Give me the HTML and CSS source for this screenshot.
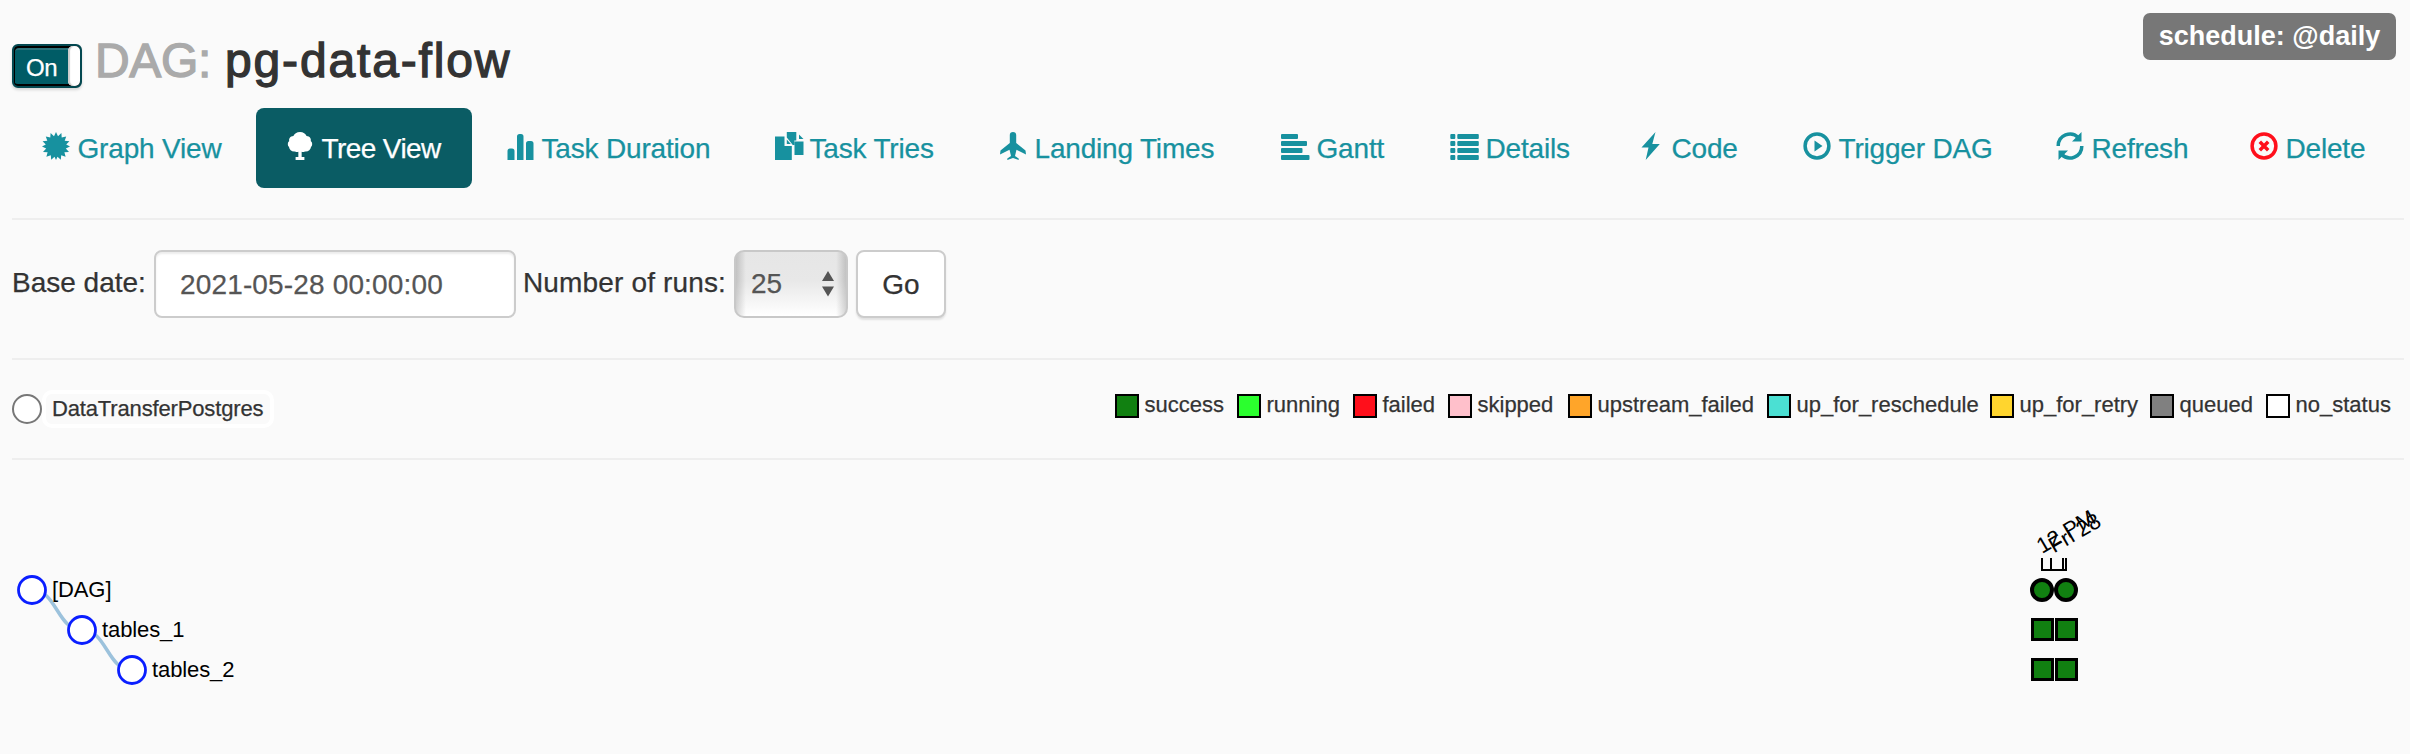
FILE: index.html
```html
<!DOCTYPE html>
<html lang="en">
<head>
<meta charset="utf-8">
<title>pg-data-flow</title>
<link rel="stylesheet" href="styles.css">
</head>
<body>
<header class="head">
  <div class="toggle"><span class="toggle-label">On</span><span class="toggle-knob"></span></div>
  <h3 class="title"><span class="muted">DAG:</span><span class="name">pg-data-flow</span></h3>
  <span class="badge">schedule: @daily</span>
</header>
<nav class="tabs">
  <a class="tab"><svg class="icon" viewBox="0 0 28 28"><path d="M14 0l2 4.200 3.400-3.200.3 4.600 4.500-1.200-1.500 4.400 4.700.4-3.200 3.400L28 14.500l-4.200 2 3.200 3.400-4.600.3 1.200 4.500-4.400-1.500-.4 4.500-3.300-3-1.500 3.300-1.500-3.300-3.300 3-.4-4.500-4.400 1.500 1.200-4.500-4.600-.3 3.200-3.400-4.200-2 3.800-1.900L.6 9.200l4.700-.4-1.500-4.400 4.500 1.200.3-4.600L12 4.200z"/></svg><span>Graph View</span></a>
  <a class="tab active"><svg class="icon" viewBox="0 0 28 28"><path transform="translate(-1.400 0) scale(1.100 1)" d="M14 0c-3 0-5.200 1.700-6 4C5 4.300 3.700 6.600 4.200 9 2.500 10.500 2.500 13.500 4 15c.3 3 2.800 5 5.500 4.500 1 .6 2 .7 3 .3V25H10v3h8v-3h-2.500v-5.200c1 .4 2 .3 3-.3 2.700.5 5.200-1.500 5.500-4.500 1.500-1.500 1.500-4.500-.2-6 .5-2.400-.8-4.700-3.800-5-.8-2.300-3-4-6-4z"/></svg><span>Tree View</span></a>
  <a class="tab"><svg class="icon" viewBox="0 0 28 28"><path d="M1.500 28V19q0-2.500 2.500-2.500h2q2.500 0 2.500 2.500v9zM11 28V4.500Q11 2 13.500 2h1.500q2.500 0 2.500 2.500V28zM20 28V11.500Q20 9 22.500 9H25q2.500 0 2.500 2.500V28z"/></svg><span>Task Duration</span></a>
  <a class="tab"><svg class="icon" viewBox="0 0 28 28"><path d="M1 4.500H10.500V14H17.800v14H1zM12.800 0h9.500v8.500h-2V13h-1.500L12.800 5.500zM12.800 7.500l4 4.500h-4zM20.500 9.500h9V23h-9zM25 2.500l4.500 4.500h-4.500z"/></svg><span>Task Tries</span></a>
  <a class="tab"><svg class="icon" viewBox="0 0 28 28"><path d="M14 0c-2 0-3.200 1.200-3.200 3v8L1.500 18.500 1 22.500l9.500-4.700L12 24l-3.700 2.500v1.500L14 26l5.700 2v-1.500L16 24l1.500-6.200 9.500 4.700-.5-4L17.200 11V3c0-1.800-1.200-3-3.200-3z"/></svg><span>Landing Times</span></a>
  <a class="tab"><svg class="icon" viewBox="0 0 28 28"><rect y="2" width="17" height="5" rx="1"/><rect y="9" width="26" height="5" rx="1"/><rect y="16" width="21.500" height="5" rx="1"/><rect y="23" width="28.500" height="5" rx="1"/></svg><span>Gantt</span></a>
  <a class="tab"><svg class="icon" viewBox="0 0 28 28"><path d="M.3 3q0-1 1-1h3q1 0 1 1v3q0 1-1 1h-3q-1 0-1-1zM.3 10q0-1 1-1h3q1 0 1 1v3q0 1-1 1h-3q-1 0-1-1zM.3 17q0-1 1-1h3q1 0 1 1v3q0 1-1 1h-3q-1 0-1-1zM.3 24q0-1 1-1h3q1 0 1 1v3q0 1-1 1h-3q-1 0-1-1z"/><rect x="7.300" y="2" width="21.500" height="5" rx="1"/><rect x="7.300" y="9" width="21.500" height="5" rx="1"/><rect x="7.300" y="16" width="21.500" height="5" rx="1"/><rect x="7.300" y="23" width="21.500" height="5" rx="1"/></svg><span>Details</span></a>
  <a class="tab"><svg class="icon" viewBox="0 0 28 28"><path d="M19.500 0L5.500 15.500h7L9.700 28 23.800 12h-7.500z"/></svg><span>Code</span></a>
  <a class="tab"><svg class="icon" viewBox="0 0 28 28"><circle class="ring" cx="14" cy="14" r="11.900"/><path d="M11.500 8.500l8 5.500-8 5.500z"/></svg><span>Trigger DAG</span></a>
  <a class="tab"><svg class="icon" viewBox="0 0 28 28"><path class="arc" d="M2.200 14A11.800 11.800 0 0 1 22.500 5.700M25.800 14A11.800 11.800 0 0 1 5.500 22.300"/><path d="M25.500 0v9.500H16zM2.500 28v-9.500H12z"/></svg><span>Refresh</span></a>
  <a class="tab"><svg class="icon danger" viewBox="0 0 28 28"><circle class="ring" cx="14" cy="14" r="11.900"/><path class="cross" d="M9.800 9.800l8.400 8.400M18.200 9.800l-8.400 8.400"/></svg><span>Delete</span></a>
</nav>
<hr class="rule">
<form class="form">
  <label class="base-label">Base date:</label>
  <div class="input">2021-05-28 00:00:00</div>
  <label class="runs-label">Number of runs:</label>
  <div class="select"><span>25</span><svg class="arrows" viewBox="0 0 12 26"><path d="M0 10L6 0l6 10zM0 15.500h12L6 25.500z"/></svg></div>
  <div class="go">Go</div>
</form>
<hr class="rule">
<section class="legend">
  <span class="dot"></span><span class="operator">DataTransferPostgres</span>
  <div class="states">
    <span class="state"><i class="sw success"></i>success</span>
    <span class="state"><i class="sw running"></i>running</span>
    <span class="state"><i class="sw failed"></i>failed</span>
    <span class="state"><i class="sw skipped"></i>skipped</span>
    <span class="state"><i class="sw upstream"></i>upstream_failed</span>
    <span class="state"><i class="sw reschedule"></i>up_for_reschedule</span>
    <span class="state"><i class="sw retry"></i>up_for_retry</span>
    <span class="state"><i class="sw queued"></i>queued</span>
    <span class="state"><i class="sw none"></i>no_status</span>
  </div>
</section>
<hr class="rule">
<svg class="tree" width="2392" height="294" viewBox="12 460 2392 294">
  <path class="link" d="M32 590C57 590 57 630 82 630M82 630C107 630 107 670 132 670"/>
  <g class="nodes"><circle cx="32" cy="590" r="13.500"/><circle cx="82" cy="630" r="13.500"/><circle cx="132" cy="670" r="13.500"/></g>
  <g class="labels"><text x="52" y="596.500">[DAG]</text><text x="102" y="636.500">tables_1</text><text x="152" y="676.500">tables_2</text></g>
  <path class="axis" d="M2042 558v12h24v-12M2051 558v12M2063 558v12"/>
  <g class="ticks"><text transform="translate(2042 554) rotate(-30)">12 PM</text><text transform="translate(2054 553.500) rotate(-30)">Fri 28</text></g>
  <g class="runs"><circle cx="2042" cy="590" r="10"/><circle cx="2066" cy="590" r="10"/></g>
  <g class="tasks"><rect x="2032.500" y="619.500" width="20" height="20"/><rect x="2056.500" y="619.500" width="20" height="20"/><rect x="2032.500" y="659.500" width="20" height="20"/><rect x="2056.500" y="659.500" width="20" height="20"/></g>
</svg>
</body>
</html>
```

FILE: styles.css
```css
* { box-sizing: border-box; }
body {
  margin: 0;
  padding: 0 6px 0 12px;
  background: #fafafa;
  color: #333;
  font: 28px/40px "Liberation Sans", Arial, sans-serif;
  white-space: nowrap;
  overflow: hidden;
  -webkit-text-stroke: .25px currentColor;
}
.head { display: flex; align-items: flex-start; height: 108px; }
.toggle {
  display: flex;
  width: 70px;
  height: 44px;
  margin-top: 44px;
  border: 2px solid #034850;
  border-radius: 6px;
  background: #005c66;
  box-shadow: inset 1px 2px 0 #000, inset 0 -2px 0 #000, inset 0 4px 0 #2b737b, 0 2px 3px rgba(0,0,0,.15);
  color: #fff;
}
.toggle-label { width: 54px; padding-left: 12px; font-size: 24px; line-height: 43px; letter-spacing: -.5px; }
.toggle-knob { width: 12px; height: 40px; border-radius: 5px; background: #fff; box-shadow: inset 2px 0 1px #ccc; }
.title { display: flex; margin: 31px 0 0 13px; font-weight: 400; font-size: 48px; line-height: 60px; -webkit-text-stroke: 1.300px currentColor; }
.muted { width: 130px; color: #aaa; letter-spacing: -.3px; }
.name { letter-spacing: 1.850px; }
.badge {
  margin: 13px 8px 0 auto;
  width: 253px;
  height: 47px;
  border-radius: 7px;
  background: #777;
  color: #fff;
  text-align: center;
  font-weight: 700;
  font-size: 27px;
  line-height: 47px;
  -webkit-text-stroke: 0;
}
.tabs {
  display: grid;
  grid-template-columns: 244px 220px 268px 225px 282px 169px 186px 167px 253px 194px 177px;
  height: 80px;
  color: #17919f;
}
.tab { display: flex; align-items: center; gap: 7.500px; margin-right: 4px; padding-left: 30px; border-radius: 8px; letter-spacing: -.18px; }
.tab span { padding-top: 1px; }
.active { background: #0a5c64; color: #fff; letter-spacing: -.6px; }
.icon { width: 28px; height: 28px; flex: none; overflow: visible; fill: currentColor; margin-top: -4px; }
.ring, .arc, .cross { fill: none; stroke: currentColor; stroke-width: 3.500; }
.danger { color: #ff0f1b; }
.rule { height: 2px; margin: 30px 0; border: 0; background: #eee; }
.form { display: flex; height: 68px; margin: 0 0 40px; }
.form + .rule { margin-top: 0; }
.base-label { width: 142px; line-height: 65px; }
.input { width: 362px; border: 2px solid #ccc; border-radius: 8px; background: #fff; box-shadow: inset 0 2px 2px rgba(0,0,0,.075); color: #555; padding-left: 24px; line-height: 66px; letter-spacing: .15px; }
.runs-label { width: 218px; padding-left: 7px; line-height: 65px; letter-spacing: .15px; }
.select {
  display: flex;
  width: 114px;
  border: 2px solid #c8c8c8;
  border-radius: 10px;
  background: linear-gradient(90deg, rgba(0,0,0,.16), transparent 9%, transparent 91%, rgba(0,0,0,.16)), linear-gradient(#e6e6e6, #e8e8e8 45%, #fff);
  color: #555;
  padding-left: 15px;
  line-height: 64px;
}
.arrows { width: 12px; height: 26px; margin: 19px 0 0 40px; fill: #555; }
.go { width: 90px; margin-left: 8px; border: 2px solid #ccc; border-radius: 8px; background: #fff; box-shadow: 0 2px 2px rgba(0,0,0,.1); text-align: center; line-height: 66px; }
.legend { display: flex; align-items: flex-start; height: 68px; font-size: 22px; line-height: 30px; }
.legend + .rule { margin: 0; }
.dot { width: 30px; height: 30px; margin-top: 4px; border: 2px solid #777; border-radius: 50%; background: #fff; }
.operator { width: 232px; height: 38px; border: 4px solid #fff; border-radius: 10px; padding-left: 6px; line-height: 30px; letter-spacing: -.15px; }
.states { display: grid; grid-template-columns: 122px 116px 95px 120px 199px 223px 160px 116px 138px; margin-left: auto; line-height: 29px; }
.state { display: flex; gap: 5.500px; }
.sw { width: 24px; height: 24px; margin-top: 4px; border: 2px solid #000; }
.success { background: #118011; }
.running { background: #2bff2e; }
.failed { background: #ff0f1b; }
.skipped { background: #ffc0cb; }
.upstream { background: #ffa529; }
.reschedule { background: #4be0d3; }
.retry { background: #ffd52e; }
.queued { background: #808080; }
.none { background: #fff; }
.tree { display: block; }
.link { fill: none; stroke: #9cc2dc; stroke-width: 3.500; }
.nodes { fill: #fff; stroke: #0a1eff; stroke-width: 2.800; }
.labels { font-size: 22px; fill: #000; letter-spacing: -.1px; }
.axis { fill: none; stroke: #000; stroke-width: 2; }
.ticks { font-size: 22px; fill: #000; }
.runs { fill: #118011; stroke: #000; stroke-width: 4; }
.tasks { fill: #118011; stroke: #000; stroke-width: 3; }
```
